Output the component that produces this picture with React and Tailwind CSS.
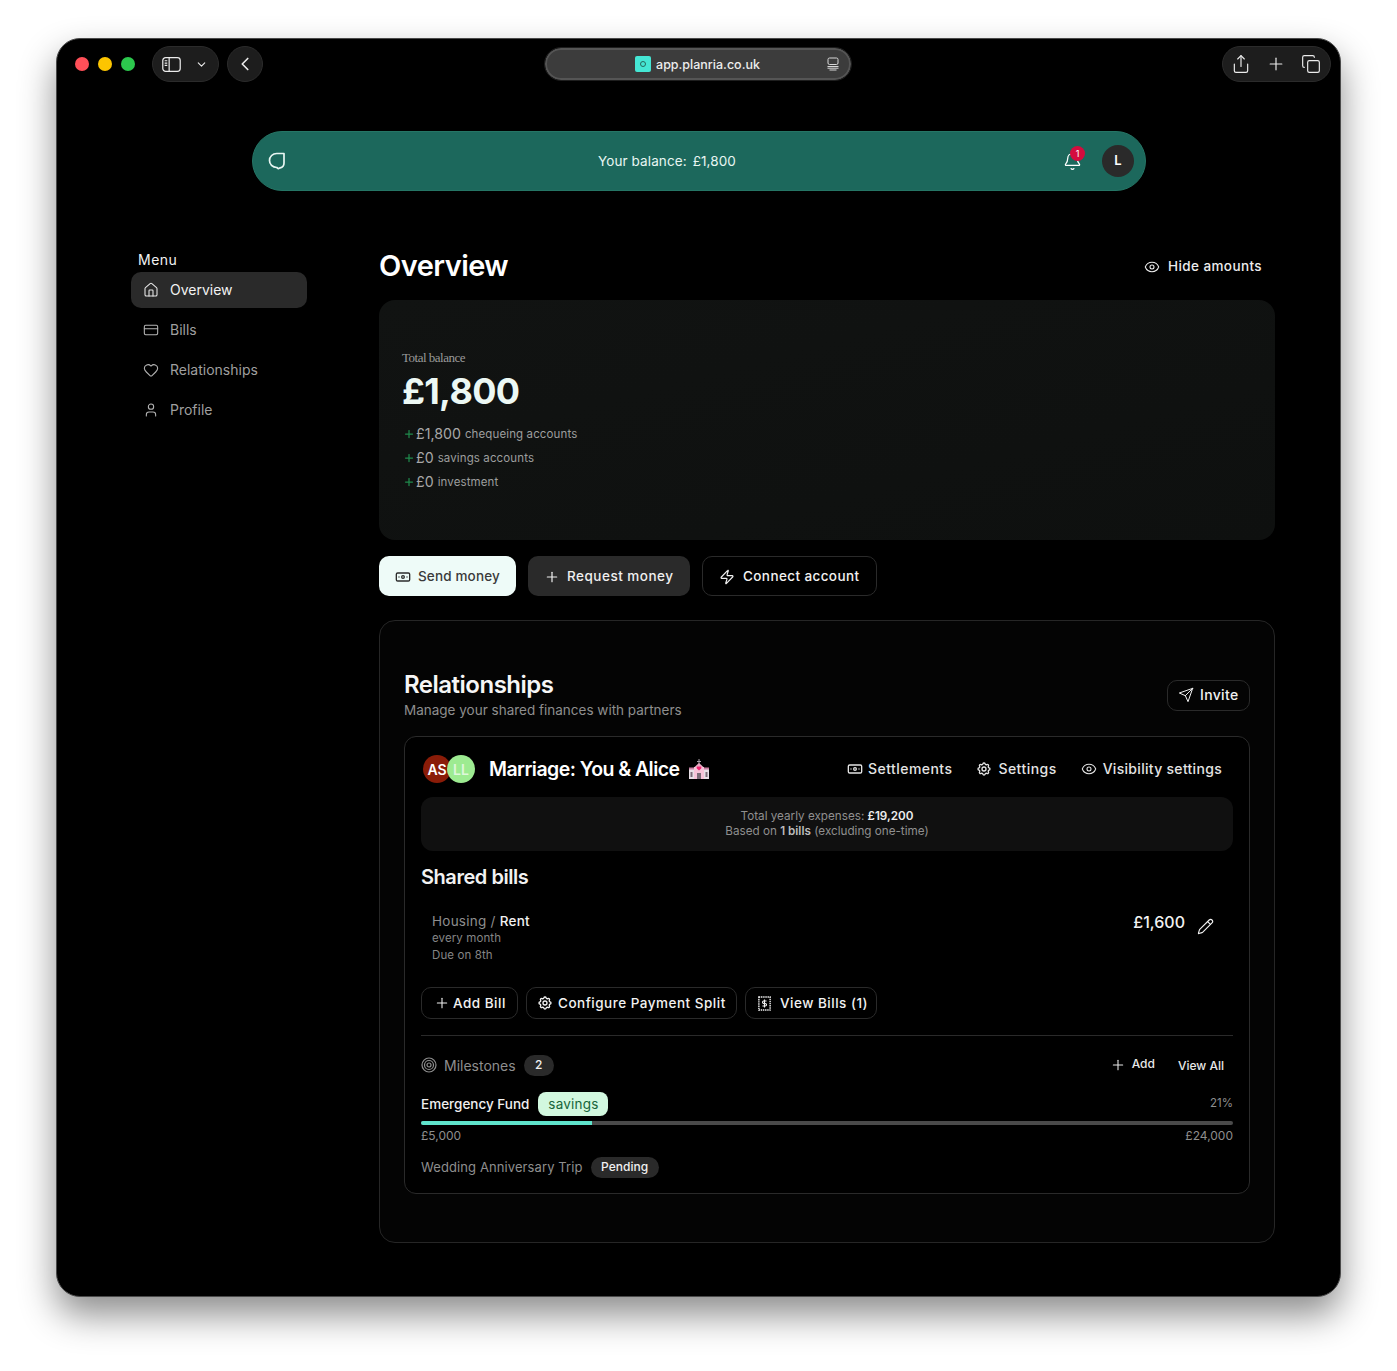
import React from 'react';
import {
  House, CreditCard, Heart, User, Eye, Banknote, Plus, Zap, Pencil, Bell, Share, Copy,
  ChevronDown, ChevronLeft,
} from 'lucide-react';
import { TbSettings } from 'react-icons/tb';
import { FiSend } from 'react-icons/fi';

const LeafLogo = ({ className }) => (
  <svg viewBox="0 0 20 20" fill="none" stroke="currentColor" strokeWidth="1.7" strokeLinejoin="round" className={className}>
    <path d="M17 2.500v9.500c0 2.600-1.500 4.300-3.800 4.800l-2 .9-1.400-1.200C5.500 16.300 2.500 13.300 2.500 9.500c0-4 3.200-7 7.200-7z" />
  </svg>
);

const SidebarIcon = () => (
  <svg viewBox="0 0 20 16" fill="none" stroke="currentColor" strokeWidth="1.3" className="w-[19px] h-[15px]">
    <rect x="0.700" y="0.700" width="18.600" height="14.600" rx="3" />
    <path d="M7.500 1v14" />
    <path d="M2.700 4h2.800M2.700 6.500h2.800M2.700 9h2.800" />
  </svg>
);

const TabsIcon = () => (
  <svg viewBox="0 0 14 14" fill="none" stroke="currentColor" strokeWidth="1" className="w-[14px] h-[14px]">
    <rect x="2" y="1" width="10" height="6.500" rx="1.500" />
    <path d="M1.500 9.500h11M1.500 11.200h11M3.500 13h7" />
  </svg>
);

const BillIcon = () => (
  <svg viewBox="0 0 16 16" fill="none" stroke="currentColor" className="w-[15px] h-[15px]">
    <rect x="2" y="1" width="12" height="14" strokeWidth="1.500" strokeDasharray="1.500 0.800" />
    <path d="M10.200 5.300H7.200a1.300 1.300 0 0 0 0 2.700h1.600a1.300 1.300 0 0 1 0 2.700H5.800M8 3.800v8.400" strokeWidth="1.200" />
  </svg>
);

const ChapelIcon = () => (
  <svg viewBox="0 0 22 20" className="w-[22px] h-[20px]">
    <path d="M10.500 0h1v2h1.500v1h-1.500v2h-1V3H9V2h1.500z" fill="#a9a0a8" />
    <path d="M11 4l5 4.500v2H6v-2z" fill="#e9a9c4" />
    <rect x="1" y="10" width="20" height="10" fill="#e8dfe6" />
    <rect x="6" y="8" width="10" height="12" fill="#f6c3d8" />
    <path d="M1 8.500h5v2H1zM16 8.500h5v2h-5z" fill="#c77fa2" />
    <path d="M11 11.500l-2.200-2a1.300 1.300 0 0 1 2.200-1.500 1.300 1.300 0 0 1 2.200 1.500z" fill="#f0246f" />
    <path d="M9 14h4v6H9zM2.500 13h2v5h-2zM17.500 13h2v5h-2z" fill="#7b6d78" />
  </svg>
);

const navItems = [
  { label: 'Overview', icon: House, active: true },
  { label: 'Bills', icon: CreditCard },
  { label: 'Relationships', icon: Heart },
  { label: 'Profile', icon: User },
];

const Outline = ({ children, className = '' }) => (
  <button className={`flex items-center border border-[#2a2a2a] text-[#f2f2f2] ${className}`}>
    {children}
  </button>
);

const BalanceLine = ({ amount, label }) => (
  <div className="flex items-center h-6 text-[#9d9e9e]">
    <Plus className="w-[12px] h-[12px] text-[#1f8a4c] ml-[1px] mr-[1px]" strokeWidth={2.500} />
    <span className="text-[14.200px] text-[#a8a8a8]">{amount}</span>
    <span className="text-[11.500px] ml-[4px] pt-px tracking-[0.12px]">{label}</span>
  </div>
);

export default function App() {
  return (
    <div className="w-full h-[1371px] overflow-hidden bg-white pt-[38px] px-[56px] font-['Inter',sans-serif]">
      <div className="h-[1259px] w-[1285px] rounded-[24px] bg-black border border-[#4a4a4a] shadow-[0_18px_36px_rgba(0,0,0,0.45)]">
        {/* Browser chrome */}
        <div className="grid grid-cols-[470px_306px_1fr] items-center pt-[7px] pl-[18px] pr-[9px] h-[43px]">
          <div className="flex items-center">
            <span className="w-[14px] h-[14px] rounded-full bg-[#ff4f58]" />
            <span className="w-[14px] h-[14px] rounded-full bg-[#fdc500] ml-[9px]" />
            <span className="w-[14px] h-[14px] rounded-full bg-[#2cc84d] ml-[9px]" />
            <div className="flex items-center h-9 w-[67px] rounded-full bg-[#1d1d1d] border border-[#2b2b2b] text-[#ececec] ml-[17px] pl-[9px]">
              <SidebarIcon />
              <ChevronDown className="w-[13px] h-[13px] ml-[14px]" strokeWidth={2} />
            </div>
            <div className="flex items-center justify-center w-9 h-9 rounded-full bg-[#1d1d1d] border border-[#2b2b2b] text-[#ececec] ml-2">
              <ChevronLeft className="w-[22px] h-[22px]" strokeWidth={1.800} />
            </div>
          </div>
          <div className="relative flex items-center justify-center h-8 rounded-full bg-[#3c3c3c] border-2 border-[#555] outline outline-[#1e1e1e] text-[#ededed]">
            <div className="flex items-center gap-[5px] text-[12.500px] font-medium pr-px">
              <span className="flex items-center justify-center w-4 h-4 rounded-[2px] bg-[#45e6d4]">
                <span className="w-[6px] h-[6px] rounded-full border border-[#26675c]" />
              </span>
              <span className="pt-[2px]">app.planria.co.uk</span>
            </div>
            <span className="absolute right-[9px] top-[7px] text-[#d8d8d8]"><TabsIcon /></span>
          </div>
          <div className="flex justify-end">
            <div className="flex items-center justify-between w-[109px] h-9 rounded-full bg-[#1d1d1d] border border-[#2b2b2b] pl-[8px] pr-[9px] text-[#ececec]">
              <Share className="w-[20px] h-[20px]" strokeWidth={1.400} />
              <Plus className="w-[20px] h-[20px]" strokeWidth={1.400} />
              <Copy className="w-[20px] h-[20px]" strokeWidth={1.400} />
            </div>
          </div>
        </div>

        {/* Balance bar */}
        <div className="flex items-center justify-between w-[894px] h-[60px] ml-[195px] mt-[49px] rounded-full bg-[#1c685c] border border-[#257565] pl-[14px] pr-[11px] text-[#e8f6f2]">
          <LeafLogo className="w-[20px] h-[20px]" />
          <div className="flex gap-[6px] text-[13.500px] mr-[16px] tracking-[0.1px] pt-px">
            <span>Your balance:</span>
            <span>£1,800</span>
          </div>
          <div className="flex items-center">
            <div className="relative mr-[20px] pt-px">
              <Bell className="w-[19px] h-[19px] text-white" strokeWidth={1.600} />
              <span className="absolute -top-[5px] left-[7px] flex items-center justify-center w-[15px] h-[15px] rounded-full bg-[#d40c3e] text-[9px] text-white">1</span>
            </div>
            <div className="flex items-center justify-center w-8 h-8 rounded-full bg-[#2a2a2a] text-white text-[13px] font-semibold">L</div>
          </div>
        </div>

        <div className="flex pl-[74px] mt-[57px]">
          {/* Sidebar */}
          <aside className="w-[176px] shrink-0 mr-[72px]">
            <div className="pl-[7px] text-[14px] text-[#f2f2f2] tracking-[0.5px] mt-[2px] h-[22px] leading-[20px]">Menu</div>
            <nav className="flex flex-col gap-1">
              {navItems.map((item) => (
                <a
                  key={item.label}
                  className={`flex items-center h-9 rounded-[10px] pl-3 pb-px text-[14px] ${item.active ? 'bg-[#2a2a2a] text-[#f2f2f2]' : 'text-[#9f9f9f]'}`}
                >
                  <item.icon className={`w-[16px] h-[16px] mr-[11px] ${item.active ? 'text-[#e8e8e8]' : 'text-[#b4b4b4]'}`} strokeWidth={1.600} />
                  {item.label}
                </a>
              ))}
            </nav>
          </aside>

          {/* Main */}
          <main className="w-[896px]">
            <div className="flex items-center justify-between h-[35px]">
              <h1 className="text-[29px] font-semibold tracking-[-0.55px] text-white">Overview</h1>
              <button className="flex items-center gap-2 pr-[13px] pt-[2px] text-[13.500px] text-[#ededed] font-medium tracking-[0.4px]">
                <Eye className="w-4 h-4" strokeWidth={1.600} />
                Hide amounts
              </button>
            </div>

            <section className="h-[240px] mt-[17px] rounded-2xl bg-gradient-to-br from-[#111312] to-[#0e100f] pl-[23px] pt-[49px]">
              <div className="font-['Liberation_Serif',serif] text-[13px] leading-[18px] text-[#9a9a9a] tracking-[-0.5px]">Total balance</div>
              <div className="text-[36px] leading-[44px] font-bold text-[#ecf8f4] tracking-[-0.7px] mt-[2px] mb-[9px]">£1,800</div>
              <BalanceLine amount="£1,800" label="chequeing accounts" />
              <BalanceLine amount="£0" label="savings accounts" />
              <BalanceLine amount="£0" label="investment" />
            </section>

            <div className="flex gap-3 mt-4 text-[13.500px] font-medium">
              <button className="flex items-center w-[137px] h-10 pl-4 pt-px rounded-[10px] bg-[#eefbf8] text-[#3a3a3a] tracking-[0.15px]">
                <Banknote className="w-4 h-4 mr-[7px] text-[#2c2c2c]" strokeWidth={2} />
                Send money
              </button>
              <button className="flex items-center w-[162px] h-10 pl-4 pt-px rounded-[10px] bg-[#2a2a2a] text-[#f0f0f0] tracking-[0.5px]">
                <Plus className="w-4 h-4 mr-[7px]" strokeWidth={1.800} />
                Request money
              </button>
              <Outline className="w-[175px] h-10 pl-4 pt-px rounded-[10px] tracking-[0.4px]">
                <Zap className="w-4 h-4 mr-[8px]" strokeWidth={1.700} />
                Connect account
              </Outline>
            </div>

            <section className="h-[623px] mt-6 rounded-2xl bg-[#040404] border border-[#262626] px-6 pt-[49px]">
              <div className="flex items-start justify-between">
                <div>
                  <h2 className="text-[24px] leading-[30px] font-semibold tracking-[-0.5px] text-[#f6f6f6]">Relationships</h2>
                  <p className="text-[13.500px] leading-[20px] text-[#8e8e8e]">Manage your shared finances with partners</p>
                </div>
                <Outline className="w-[83px] h-[31px] mt-[10px] pl-[10px] pb-[2px] rounded-[10px] text-[14px] font-medium gap-[6px] tracking-[0.35px]">
                  <FiSend className="w-4 h-4" strokeWidth={1.500} />
                  Invite
                </Outline>
              </div>

              <div className="h-[458px] mt-[16px] rounded-xl bg-black border border-[#2a2a2a] px-4 pt-4">
                <div className="flex items-center justify-between h-8">
                  <div className="flex items-center">
                    <div className="flex items-center ml-[2px]">
                      <span className="flex items-center justify-center w-7 h-7 rounded-full bg-[#8a1c08] text-[14px] font-semibold text-white">AS</span>
                      <span className="flex items-center justify-center w-7 h-7 -ml-[4px] rounded-full bg-[#9deb91] text-[14px] font-semibold text-[#dff7db]">LL</span>
                    </div>
                    <h3 className="ml-[14px] pt-px text-[19.500px] font-semibold tracking-[-0.55px] text-white">Marriage: You &amp; Alice</h3>
                    <span className="ml-[8px]"><ChapelIcon /></span>
                  </div>
                  <div className="flex items-center pb-[1px] text-[14px] text-[#e4e4e4] font-medium tracking-[0.45px] pr-[11px]">
                    <Banknote className="w-[16px] h-[16px] mr-[5px]" strokeWidth={2} />
                    Settlements
                    <TbSettings className="w-4 h-4 ml-[24px] mr-[6px]" />
                    Settings
                    <Eye className="w-4 h-4 ml-[24px] mr-[6px]" strokeWidth={1.600} />
                    <span className="tracking-[0.3px]">Visibility settings</span>
                  </div>
                </div>

                <div className="flex flex-col items-center justify-center h-[54px] mt-[12px] rounded-xl bg-[#101010] text-[11.700px] leading-[15px] text-[#8f8f8f]">
                  <div>Total yearly expenses: <b className="font-semibold text-[#ededed]">£19,200</b></div>
                  <div>Based on <b className="font-semibold text-[#bcbcbc]">1 bills</b> (excluding one-time)</div>
                </div>

                <h4 className="mt-[13px] text-[20px] leading-[26px] font-semibold tracking-[-0.45px] text-[#f2f2f2]">Shared bills</h4>

                <div className="flex justify-between mt-[21px] pl-[11px] pr-[19px]">
                  <div>
                    <div className="text-[13.500px] leading-[20px] text-[#8e8e8e] tracking-[0.25px]">
                      Housing / <span className="font-medium text-[#f2f2f2]">Rent</span>
                    </div>
                    <div className="text-[11.500px] leading-[17px] text-[#858585] tracking-[0.1px] mt-[-1px]">every month</div>
                    <div className="text-[11.500px] leading-[17px] text-[#858585] tracking-[0.1px]">Due on 8th</div>
                  </div>
                  <div className="flex items-start text-[#f2f2f2] pt-px">
                    <span className="text-[16px] leading-[20px] font-medium">£1,600</span>
                    <Pencil className="w-[17px] h-[17px] ml-[12px] mt-[6px]" strokeWidth={1.600} />
                  </div>
                </div>

                <div className="flex gap-2 mt-[23px] text-[13.500px] font-medium tracking-[0.5px]">
                  <Outline className="w-[97px] h-8 pl-3 rounded-[10px]">
                    <Plus className="w-4 h-4 mr-[3px]" strokeWidth={1.600} />
                    Add Bill
                  </Outline>
                  <Outline className="w-[211px] h-8 pl-[10px] rounded-[10px]">
                    <TbSettings className="w-4 h-4 mr-[5px]" />
                    Configure Payment Split
                  </Outline>
                  <Outline className="w-[132px] h-8 pl-[11px] rounded-[10px]">
                    <BillIcon />
                    <span className="ml-[8px]">View Bills (1)</span>
                  </Outline>
                </div>

                <div className="h-px bg-[#2a2a2a] mt-[16px]" />

                <div className="flex items-center justify-between mt-[18px] h-[22px]">
                  <div className="flex items-center">
                    <svg viewBox="0 0 16 16" fill="none" stroke="#8e8e8e" strokeWidth="1.200" className="w-[16px] h-[16px]">
                      <circle cx="8" cy="8" r="7" />
                      <circle cx="8" cy="8" r="4.500" />
                      <circle cx="8" cy="8" r="2" />
                    </svg>
                    <span className="ml-[7px] text-[14px] text-[#8e8e8e]">Milestones</span>
                    <span className="flex items-center justify-center ml-[8px] w-[30px] h-[21px] rounded-full bg-[#2a2a2a] text-[12px] font-medium text-[#f0f0f0]">2</span>
                  </div>
                  <div className="flex items-center text-[12px] font-medium text-[#e8e8e8] pr-[9px]">
                    <Plus className="w-4 h-4 mr-[6px]" strokeWidth={1.600} />
                    <span className="-mt-[3px]">Add</span>
                    <span className="ml-[23px] pt-px">View All</span>
                  </div>
                </div>

                <div className="flex items-center justify-between mt-[16px] h-6">
                  <div className="flex items-center">
                    <span className="text-[13.500px] font-medium text-[#f0f0f0]">Emergency Fund</span>
                    <span className="flex items-center justify-center ml-[9px] w-[70px] h-6 rounded-lg bg-[#d2f8df] text-[13.500px] text-[#17653a] tracking-[0.2px]">savings</span>
                  </div>
                  <span className="text-[11.500px] text-[#8e8e8e]">21%</span>
                </div>
                <div className="h-1 mt-[5px] rounded-full bg-[#4a4a4a] overflow-hidden">
                  <div className="h-full w-[21%] bg-[#5fe3cb]" />
                </div>
                <div className="flex justify-between mt-[2px] text-[12px] leading-[18px] text-[#8e8e8e]">
                  <span>£5,000</span>
                  <span>£24,000</span>
                </div>

                <div className="flex items-center mt-[12px] h-[22px]">
                  <span className="text-[13px] text-[#8e8e8e] tracking-[0.1px]">Wedding Anniversary Trip</span>
                  <span className="flex items-center justify-center ml-2 -mt-[2px] w-[68px] h-[21px] rounded-full bg-[#2a2a2a] text-[12px] font-medium text-[#f0f0f0]">Pending</span>
                </div>
              </div>
            </section>
          </main>
        </div>
      </div>
    </div>
  );
}
